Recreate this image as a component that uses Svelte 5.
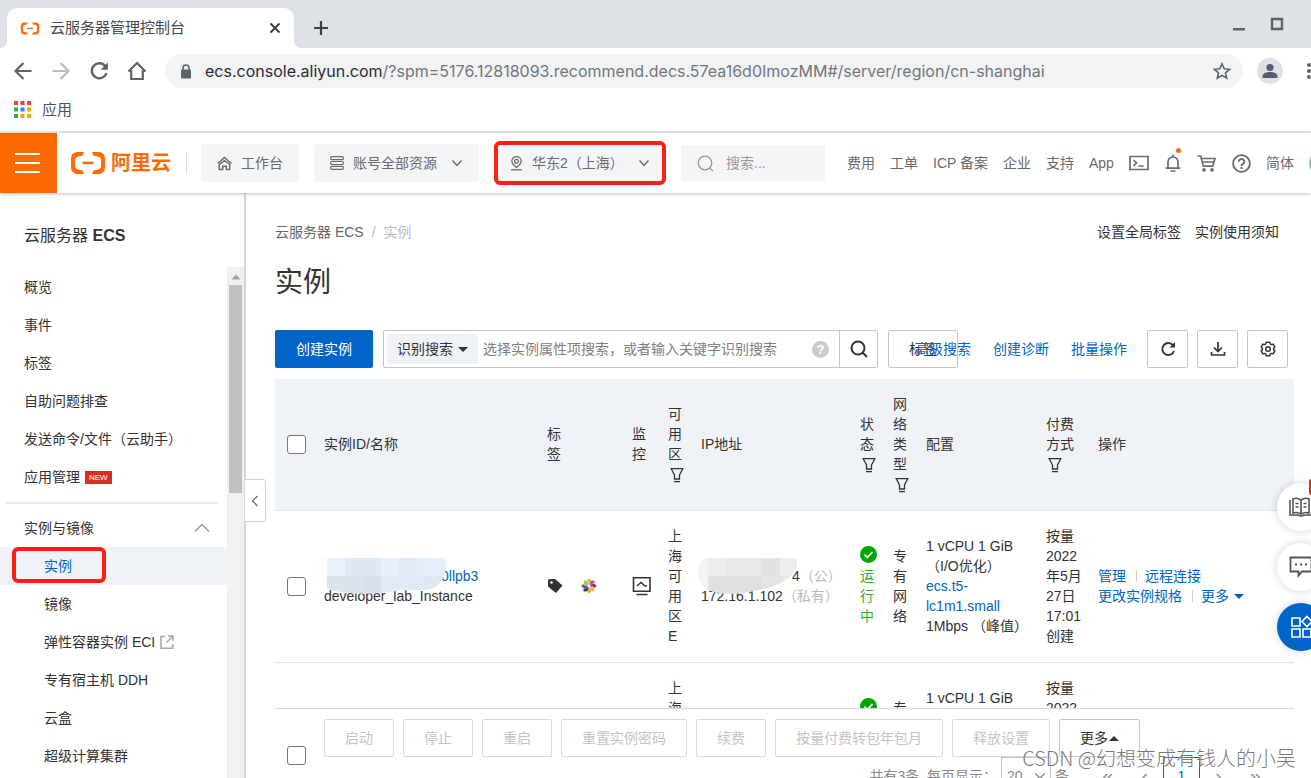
<script lang="ts">
  interface NavItem {
    label: string;
    isNew?: boolean;
    external?: boolean;
    active?: boolean;
  }

  const topItems: NavItem[] = [
    { label: "概览" },
    { label: "事件" },
    { label: "标签" },
    { label: "自助问题排查" },
    { label: "发送命令/文件（云助手）" },
    { label: "应用管理", isNew: true }
  ];

  const instanceItems: NavItem[] = [
    { label: "实例", active: true },
    { label: "镜像" },
    { label: "弹性容器实例 ECI", external: true },
    { label: "专有宿主机 DDH" },
    { label: "云盒" },
    { label: "超级计算集群" }
  ];

  const headerLinks = ["费用", "工单", "ICP 备案", "企业", "支持", "App"];
  const batchActions = ["启动", "停止", "重启", "重置实例密码", "续费", "按量付费转包年包月", "释放设置"];
  const appColors = ["#ea4335", "#ea4335", "#ea4335", "#34a853", "#1a88ff", "#fbaa05", "#34a853", "#fbaa05", "#fbaa05"];
  const petals = ["#f0a830", "#c04898", "#8c2d7c", "#f5b54a", "#f0a830", "#322b7c", "#5a4fa0", "#a4cf3c"];

  const instances = [
    { id: "0llpb3", name: "developer_lab_Instance", publicIp: "4", privateIp: "172.16.1.102" },
    { id: "7kq2xd", name: "developer_lab_Instance", publicIp: "8", privateIp: "172.16.1.103" }
  ];

  let keyword = "";
  let pageSize = "20";
</script>

{#snippet chevron(size: number)}
  <svg width={size} height={size} viewBox="0 0 12 12" fill="none" stroke="currentColor" stroke-width="1.5">
    <path d="M1.5 3.5 6 8.5l4.500-5" />
  </svg>
{/snippet}

{#snippet filter()}
  <svg class="filter" width="14" height="16" viewBox="0 0 14 16" fill="none" stroke="currentColor" stroke-width="1.3">
    <path d="M1.200 1.700h11.600L9.500 8v4h-5V8Z" />
    <path d="M4 14.600h6" />
  </svg>
{/snippet}

{#snippet brand(width: number, height: number)}
  <svg {width} {height} viewBox="0 0 36 24" fill="#ff6a00">
    <path d="M14 1H8Q1 1 1 8v8q0 7 7 7h6l-1.500-3.500-5-1.200Q5 17.700 5 15.500v-7q0-2.200 2.500-2.800l5-1.200Z" />
    <path d="M22 1h6q7 0 7 7v8q0 7-7 7h-6l1.500-3.500 5-1.200q2.500-.600 2.500-2.800v-7q0-2.200-2.500-2.800l-5-1.200Z" />
    <path d="M12.500 10.700h11v2.400h-11z" />
  </svg>
{/snippet}

<div class="window">
  <!-- Browser chrome -->
  <div class="tabs">
    <div class="tab">
      {@render brand(20, 13)}
      <span class="tab-title">云服务器管理控制台</span>
      <button aria-label="关闭标签页">
        <svg width="12" height="12" viewBox="0 0 12 12" stroke="#3c4043" stroke-width="2"><path d="m1.500 1.500 9 9m0-9-9 9" /></svg>
      </button>
    </div>
    <button class="new-tab" aria-label="新标签页">
      <svg width="16" height="16" viewBox="0 0 16 16" stroke="#3c4043" stroke-width="2.200"><path d="M8 1v14M1 8h14" /></svg>
    </button>
    <div class="controls">
      <button aria-label="最小化">
        <svg width="14" height="14" viewBox="0 0 14 14"><path d="M1 11h12v2.500H1z" fill="#5f6368" /></svg>
      </button>
      <button aria-label="最大化">
        <svg width="14" height="14" viewBox="0 0 14 14"><path d="M2 2h10v10H2z" fill="none" stroke="#5f6368" stroke-width="2.400" /></svg>
      </button>
    </div>
  </div>

  <div class="toolbar">
    <button aria-label="后退">
      <svg width="20" height="20" viewBox="0 0 20 20" fill="none" stroke="#5f6368" stroke-width="2.200"><path d="M18.500 10H3m7.500-8L2.500 10l8 8" /></svg>
    </button>
    <button aria-label="前进">
      <svg width="20" height="20" viewBox="0 0 20 20" fill="none" stroke="#babcbe" stroke-width="2.200"><path d="M1.500 10H17M9.500 2l8 8-8 8" /></svg>
    </button>
    <button aria-label="刷新">
      <svg width="20" height="20" viewBox="0 0 20 20" fill="none" stroke="#5f6368" stroke-width="2.400">
        <path d="M16.500 5.500a7.500 7.500 0 1 0 1 6.500" />
        <path d="M18.800 1.500v7.200h-7.200Z" fill="#5f6368" stroke="none" />
      </svg>
    </button>
    <button aria-label="主页">
      <svg width="20" height="20" viewBox="0 0 20 20" fill="none" stroke="#5f6368" stroke-width="2.200"><path d="M1.500 10.500 10 2l8.500 8.500M4.200 9v9h11.600V9" /></svg>
    </button>
    <div class="omnibox">
      <svg width="12" height="15" viewBox="0 0 12 15">
        <path d="M3 6V4a3 3 0 0 1 6 0v2" fill="none" stroke="#5f6368" stroke-width="1.600" />
        <rect x="1" y="5.500" width="10" height="9" rx="1" fill="#5f6368" />
      </svg>
      <span class="url"><b>ecs.console.aliyun.com</b>/?spm=5176.12818093.recommend.decs.57ea16d0ImozMM#/server/region/cn-shanghai</span>
      <button aria-label="收藏">
        <svg width="18" height="18" viewBox="0 0 18 18" fill="none" stroke="#5f6368" stroke-width="1.600">
          <path d="m9 1.800 2.200 5 5.400.5-4.100 3.600 1.200 5.300L9 13.400l-4.700 2.800 1.200-5.300-4.100-3.600 5.400-.5Z" />
        </svg>
      </button>
    </div>
    <button class="profile" aria-label="用户">
      <svg width="16" height="16" viewBox="0 0 16 16" fill="#555e70"><circle cx="8" cy="4.500" r="3.600" /><path d="M.5 15v-2c0-2.600 4-4 7.500-4s7.500 1.400 7.500 4v2Z" /></svg>
    </button>
    <button class="more-dots" aria-label="更多">
      <svg width="4" height="18" viewBox="0 0 4 18" fill="#5f6368"><circle cx="2" cy="3" r="2" /><circle cx="2" cy="9" r="2" /><circle cx="2" cy="15" r="2" /></svg>
    </button>
  </div>

  <div class="bookmarks">
    <svg width="17" height="17" viewBox="0 0 17 17">
      {#each appColors as color, i (i)}
        <rect x={(i % 3) * 6.5} y={Math.floor(i / 3) * 6.5} width="4" height="4" fill={color} />
      {/each}
    </svg>
    <a href="#apps">应用</a>
  </div>

  <!-- Console header -->
  <header>
    <button class="burger" aria-label="菜单">
      <svg width="25" height="20" viewBox="0 0 25 20" fill="#fff"><path d="M0 0h25v2H0zM0 9h25v2H0zM0 18h25v2H0z" /></svg>
    </button>
    <a class="logo" href="#home">{@render brand(36, 24)}<span>阿里云</span></a>
    <i class="divider"></i>
    <button class="pill">
      <svg width="15" height="15" viewBox="0 0 15 15" fill="none" stroke="currentColor" stroke-width="1.500">
        <path d="M.8 7.500 7.500 1.500l6.700 6M2.300 8.500v5h3.400v-3.300h3.600v3.300h3.400v-5L7.500 4.600Z" />
      </svg>
      工作台
    </button>
    <button class="pill account">
      <svg width="14" height="14" viewBox="0 0 14 14" fill="none" stroke="currentColor" stroke-width="1.200">
        <rect x=".7" y=".7" width="12.600" height="3" rx="1" />
        <rect x=".7" y="5.500" width="12.600" height="3" rx="1" />
        <rect x=".7" y="10.300" width="12.600" height="3" rx="1" />
      </svg>
      <span>账号全部资源</span>
      {@render chevron(12)}
    </button>
    <button class="pill region">
      <svg width="13" height="15" viewBox="0 0 13 15" fill="none" stroke="currentColor" stroke-width="1.300">
        <path d="M6.500 11.500C3 8.800 1.800 7.300 1.800 5.300a4.700 4.700 0 0 1 9.400 0c0 2-1.200 3.500-4.700 6.200Z" />
        <circle cx="6.500" cy="5.300" r="1.900" /><path d="M1 13.800h11" />
      </svg>
      <span>华东2（上海）</span>
      {@render chevron(12)}
    </button>
    <label class="search">
      <svg width="17" height="17" viewBox="0 0 17 17" fill="none" stroke="#999" stroke-width="1.300"><circle cx="8" cy="8" r="6.800" /><path d="m12.500 13 3.500 3" /></svg>
      <input type="text" placeholder="搜索..." aria-label="搜索" />
    </label>
    <nav>
      {#each headerLinks as link (link)}
        <a href="#{link}">{link}</a>
      {/each}
      <div class="tools">
        <button aria-label="命令行">
          <svg width="20" height="16" viewBox="0 0 20 16" fill="none" stroke="currentColor" stroke-width="1.700"><path d="M1 1.500h18v13H1zM4.500 5 7.500 8l-3 3M9.500 11h5" /></svg>
        </button>
        <button class="bell" aria-label="消息">
          <svg width="16" height="18" viewBox="0 0 16 18" fill="none" stroke="currentColor" stroke-width="1.700"><path d="M3 14V8a5 5 0 0 1 10 0v6M.7 14.200h14.600M8 .5V3M5.500 17h5" /></svg>
        </button>
        <button aria-label="购物车">
          <svg width="19" height="18" viewBox="0 0 19 18" fill="none" stroke="currentColor" stroke-width="1.700">
            <path d="M.5 2h3.200l2.600 10.200h9.400L18 4.500H4.500M5.500 8h11.500" />
            <circle cx="7" cy="15.800" r="1" /><circle cx="15" cy="15.800" r="1" />
          </svg>
        </button>
        <button aria-label="帮助">
          <svg width="19" height="19" viewBox="0 0 19 19" fill="none" stroke="currentColor" stroke-width="1.900"><circle cx="9.500" cy="9.500" r="8.400" /><path d="M6.700 7.700a2.800 2.600 0 1 1 4.300 2.200q-1.500.8-1.500 2M9.500 13v1.900" /></svg>
        </button>
      </div>
      <a href="#lang">简体</a>
      <i class="avatar"></i>
    </nav>
  </header>

  <div class="body">
    <aside>
      <h2>云服务器 <b>ECS</b></h2>
      <div class="scroll">
        <div class="menu">
          {#each topItems as item (item.label)}
            <a href="#{item.label}">{item.label}{#if item.isNew}<em>NEW</em>{/if}</a>
          {/each}
          <hr />
          <button class="group">
            实例与镜像
            <svg width="16" height="10" viewBox="0 0 16 10" fill="none" stroke="#999" stroke-width="1.500"><path d="m1 8.500 7-7 7 7" /></svg>
          </button>
          {#each instanceItems as item (item.label)}
            <a class="sub" class:active={item.active} href="#{item.label}">
              {item.label}
              {#if item.external}
                <svg width="14" height="14" viewBox="0 0 14 14" fill="none" stroke="#aaa" stroke-width="1.600"><path d="M5 1.500H1v11.700h11.700V9M8 1h5v5M13 1 6.500 7.500" /></svg>
              {/if}
            </a>
          {/each}
        </div>
        <div class="scrollbar">
          <svg width="10" height="6" viewBox="0 0 10 6"><path d="m5 .5 4.500 5h-9Z" fill="#a3a3a3" /></svg>
          <div class="thumb"></div>
        </div>
      </div>
    </aside>

    <main>
      <button class="collapse" aria-label="收起">
        <svg width="8" height="12" viewBox="0 0 8 12" fill="none" stroke="#777" stroke-width="1.500"><path d="M6.500 1 1.500 6l5 5" /></svg>
      </button>

      <div class="crumbs">
        <a href="#ecs">云服务器 ECS</a><span>/</span><span>实例</span>
        <div class="crumb-links">
          <a href="#tags">设置全局标签</a>
          <a href="#notice">实例使用须知</a>
        </div>
      </div>
      <h1>实例</h1>

      <div class="actions">
        <div class="left">
          <button class="primary">创建实例</button>
          <div class="query">
            <button class="mode">识别搜索 <i class="caret"></i></button>
            <input type="text" aria-label="搜索实例" placeholder="选择实例属性项搜索，或者输入关键字识别搜索" bind:value={keyword} />
            <span class="hint">?</span>
            <button class="go" aria-label="查询">
              <svg width="18" height="18" viewBox="0 0 18 18" fill="none" stroke="#333" stroke-width="2"><circle cx="8" cy="8" r="6.500" /><path d="m12.500 12.500 4.500 4.500" /></svg>
            </button>
          </div>
          <button class="plain">标签</button>
        </div>
        <div class="right">
          <a href="#advanced">高级搜索</a>
          <a href="#diagnose">创建诊断</a>
          <a href="#batch">批量操作</a>
          <div class="icons">
            <button aria-label="刷新">
              <svg width="16" height="16" viewBox="0 0 16 16" fill="none" stroke="#333" stroke-width="1.900"><path d="M13 4.300A6 6 0 1 0 14 10" /><path d="M15 1v5.500H9.500Z" fill="#333" stroke="none" /></svg>
            </button>
            <button aria-label="下载">
              <svg width="16" height="16" viewBox="0 0 16 16" fill="none" stroke="#333" stroke-width="1.700"><path d="M8 1v9M4 6.500l4 4 4-4M1.500 11v3h13v-3" /></svg>
            </button>
            <button aria-label="设置">
              <svg width="16" height="16" viewBox="0 0 16 16" fill="none" stroke="#333" stroke-width="1.500" stroke-linejoin="round">
                <path d="M6.200 1.200h3.600l.4 1.700 1.200.7 1.700-.5 1.700 3-1.200 1.200v1.400l1.200 1.200-1.700 3-1.700-.5-1.200.7-.4 1.700H6.200l-.4-1.700-1.200-.7-1.700.5-1.700-3 1.200-1.200V7.300L1.200 6.100l1.700-3 1.700.5 1.200-.7Z" />
                <circle cx="8" cy="8" r="2.300" />
              </svg>
            </button>
          </div>
        </div>
      </div>

      <div class="table-wrap">
        <table>
          <colgroup>
            <col class="w-check" /><col class="w-name" /><col class="w-tag" /><col class="w-mon" /><col class="w-narrow" />
            <col class="w-ip" /><col class="w-narrow" /><col class="w-narrow" /><col class="w-conf" /><col class="w-pay" /><col />
          </colgroup>
          <thead>
            <tr>
              <th class="check"><input type="checkbox" aria-label="全选" /></th>
              <th>实例ID/名称</th>
              <th><div class="stack">标签</div></th>
              <th>监控</th>
              <th>可用区{@render filter()}</th>
              <th>IP地址</th>
              <th>状态{@render filter()}</th>
              <th>网络类型{@render filter()}</th>
              <th>配置</th>
              <th>付费方式{@render filter()}</th>
              <th>操作</th>
            </tr>
          </thead>
          <tbody>
            {#each instances as inst (inst.id)}
              <tr>
                <td class="check"><input type="checkbox" aria-label="选择 {inst.id}" /></td>
                <td>
                  <div class="masked">
                    <a class="id" href="#{inst.id}">{inst.id}</a><br />{inst.name}
                    <svg class="mosaic-id" width="134" height="36" viewBox="0 0 134 36">
                      <clipPath id="blob-{inst.id}"><path d="M8 0h122q4 0 4 8-1 14-12 22-12 3-32 2-32 6-62 2Q0 28 0 14 0 2 8 0Z" /></clipPath>
                      <g clip-path="url(#blob-{inst.id})">
                        <path d="M0 0h134v36H0z" fill="#fdfdfe" />
                        <path d="M15 0h18v18H15z" fill="#e9f1fb" /><path d="M33 0h36v18H33z" fill="#dfe9f6" />
                        <path d="M69 0h18v18H69z" fill="#e7effa" /><path d="M87 0h18v18H87z" fill="#e0eaf6" /><path d="M105 0h29v18h-29z" fill="#e4edf9" />
                        <path d="M15 18h36v18H15z" fill="#dce3ed" /><path d="M51 18h18v18H51z" fill="#d8e0ec" />
                        <path d="M69 18h36v18H69z" fill="#e1eaf5" /><path d="M105 18h29v18h-29z" fill="#dfe8f3" />
                      </g>
                    </svg>
                  </div>
                </td>
                <td>
                  <div class="tags">
                    <svg width="16" height="16" viewBox="0 0 16 16"><path d="M1 3q0-2 2-2h5l7.500 6.500L9 15 1 8.500Z" fill="#333" /><circle cx="4.500" cy="4.500" r="1.300" fill="#fff" /></svg>
                    <svg width="16" height="16" viewBox="0 0 16 16">
                      {#each petals as color, i (i)}
                        <path d="M8 8 5.200 3.800 6.500 1.500 8 .2l1.500 1.300 1.300 2.300Z" fill={color} stroke="#fff" stroke-width=".400" transform="rotate({i * 45} 8 8)" />
                      {/each}
                      <circle cx="8" cy="8" r="1.200" fill="#fff" />
                    </svg>
                  </div>
                </td>
                <td class="wide-icon">
                  <svg width="20" height="20" viewBox="0 0 20 20" fill="none" stroke="#333" stroke-width="1.600"><path d="M1.500 1.800h16.500v13.500H1.500zM5 10l4-3.500L13 10h2M4.500 18.500h11" /></svg>
                </td>
                <td>上海可用区E</td>
                <td>
                  <div class="masked nowrap">
                    <span class="public">{inst.publicIp}</span><small>（公）</small><br />{inst.privateIp}<small>（私有）</small>
                    <svg class="mosaic-ip" width="100" height="36" viewBox="0 0 100 36">
                      <clipPath id="ip-{inst.id}"><path d="M8 0h90q4 12-8 20-8 8-30 12-24 6-44 2Q0 30 0 14 0 4 8 0Z" /></clipPath>
                      <g clip-path="url(#ip-{inst.id})">
                        <path d="M0 0h100v36H0z" fill="#f4f4f4" />
                        <path d="M10 0h18v18H10z" fill="#ededed" /><path d="M28 0h36v18H28z" fill="#e8e8e8" />
                        <path d="M64 0h18v18H64z" fill="#e2e2e3" /><path d="M82 0h18v18H82z" fill="#ededed" />
                        <path d="M10 18h54v18H10z" fill="#e0e0e0" /><path d="M64 18h36v18H64z" fill="#e5e5e6" />
                      </g>
                    </svg>
                  </div>
                </td>
                <td class="running">
                  <svg width="17" height="17" viewBox="0 0 17 17"><circle cx="8.500" cy="8.500" r="8.500" fill="#00a700" /><path d="m4.500 8.700 2.800 2.800L12.500 6" fill="none" stroke="#fff" stroke-width="1.800" /></svg>
                  运行中
                </td>
                <td>专有网络</td>
                <td class="nowrap">1 vCPU 1 GiB<br />（I/O优化）<br /><a href="#spec">ecs.t5-<br />lc1m1.small</a><br />1Mbps （峰值）</td>
                <td class="nowrap">按量<br />2022<br />年5月<br />27日<br />17:01<br />创建</td>
                <td>
                  <a href="#manage">管理</a><i class="bar"></i><a href="#connect">远程连接</a><br />
                  <a href="#resize">更改实例规格</a><i class="bar"></i><a href="#more">更多 <i class="caret blue"></i></a>
                </td>
              </tr>
            {/each}
          </tbody>
        </table>
      </div>

      <footer>
        <input type="checkbox" aria-label="选择本页全部" />
        <div class="footer-main">
          <div class="batch">
            {#each batchActions as action (action)}
              <button disabled>{action}</button>
            {/each}
            <button class="more">更多<i class="caret up"></i></button>
          </div>
          <div class="pager">
            <label for="page-size">共有3条, 每页显示：</label>
            <div class="size">
              <select id="page-size" bind:value={pageSize}>
                <option>20</option>
                <option>50</option>
              </select>
              {@render chevron(12)}
            </div>
            <span>条</span>
            <button>«</button>
            <button>‹</button>
            <button class="current">1</button>
            <button>›</button>
            <button>»</button>
          </div>
        </div>
      </footer>
    </main>
  </div>

  <div class="floats">
    <button aria-label="文档">
      <svg width="24" height="22" viewBox="0 0 24 22" fill="none" stroke="#555" stroke-width="1.600"><path d="M12 4Q8 1 4 3v14q4-1.500 8 1 4-2.500 8-1V3q-4-2-8 1v14M1 4v15h8q3 2 6 0h8V4M6.500 7.500h3M6.500 11h3M14.500 7.500h3M14.500 11h3" /></svg>
      <i class="badge"></i>
    </button>
    <button aria-label="反馈">
      <svg width="24" height="22" viewBox="0 0 24 22" fill="none" stroke="#555" stroke-width="1.800"><path d="M1.500 1.500h21v14H13l-3.500 4v-4h-8Z" /><path d="M6 8.500h2m3 0h2m3 0h2" stroke-width="2" /></svg>
    </button>
    <button class="apps" aria-label="应用中心">
      <svg width="24" height="24" viewBox="0 0 24 24" fill="none" stroke="#fff" stroke-width="1.600"><path d="M3 3h8v8H3zM3 14h8v8H3zM14 14h8v8h-8zM18 1.500 23 6.500l-5 5-5-5Z" /></svg>
    </button>
  </div>
  <div class="watermark">CSDN @幻想变成有钱人的小吴</div>
</div>

<style>
  :global(body) {
    margin: 0;
    background: #fff;
  }

  .window {
    position: relative;
    display: flex;
    flex-direction: column;
    height: 100vh;
    overflow: hidden;
    color: #333;
    font-family: "Liberation Sans", "Noto Sans CJK SC", sans-serif;
    font-size: 14px;
    line-height: 20px;
  }

  .window *,
  .window *::before,
  .window *::after {
    box-sizing: border-box;
  }

  button,
  input,
  select {
    margin: 0;
    padding: 0;
    border: 0;
    background: none;
    color: inherit;
    font: inherit;
  }

  a {
    color: inherit;
    text-decoration: none;
  }

  svg {
    display: block;
    flex-shrink: 0;
  }

  .tabs {
    display: flex;
    align-items: flex-end;
    height: 48px;
    flex-shrink: 0;
    padding-left: 7px;
    background: #dee1e6;
  }

  .tab {
    position: relative;
    display: flex;
    align-items: center;
    width: 287px;
    height: 40px;
    padding: 0 13px;
    border-radius: 10px 10px 0 0;
    background: #fff;
  }

  .tab::before,
  .tab::after {
    content: "";
    position: absolute;
    bottom: 0;
    left: -8px;
    width: 8px;
    height: 8px;
    background: radial-gradient(circle at 0 0, #dee1e6 8px, #fff 8px);
  }

  .tab::after {
    left: auto;
    right: -8px;
    background: radial-gradient(circle at 100% 0, #dee1e6 8px, #fff 8px);
  }

  .tab-title {
    flex: 1;
    padding-left: 10px;
    color: #45494d;
    font-size: 15px;
  }

  .new-tab {
    height: 40px;
    padding: 0 19px;
  }

  .controls {
    display: flex;
    gap: 24px;
    height: 48px;
    margin-left: auto;
    padding-right: 27px;
  }

  .toolbar {
    display: flex;
    align-items: center;
    gap: 18px;
    height: 46px;
    flex-shrink: 0;
    padding-left: 13px;
  }

  .omnibox {
    display: flex;
    align-items: center;
    flex: 1;
    min-width: 0;
    height: 34px;
    padding: 0 12px 0 15px;
    border-radius: 17px;
    background: #f1f3f4;
  }

  .url {
    flex: 1;
    padding-left: 13px;
    color: #74777a;
    font-family: Inter, "Liberation Sans", sans-serif;
    font-size: 16px;
    white-space: nowrap;
  }

  .url b {
    color: #2b2e31;
    font-weight: 400;
  }

  .profile {
    display: flex;
    align-items: center;
    justify-content: center;
    width: 26px;
    height: 26px;
    margin-left: -4px;
    border-radius: 50%;
    background: #dee1e6;
  }

  .more-dots {
    width: 10px;
    padding-left: 6px;
  }

  .bookmarks {
    display: flex;
    align-items: center;
    gap: 11px;
    height: 39px;
    flex-shrink: 0;
    padding: 0 14px 6px;
    border-bottom: 2px solid #e6e8ea;
    color: #505458;
    font-size: 15px;
  }

  header {
    position: relative;
    z-index: 2;
    display: flex;
    align-items: center;
    height: 60px;
    flex-shrink: 0;
    background: #fff;
    box-shadow: 0 1px 4px rgba(0, 0, 0, 0.25);
    color: #6b6b6b;
  }

  .burger {
    display: flex;
    align-items: center;
    justify-content: center;
    width: 57px;
    height: 60px;
    padding-right: 3px;
    background: #ff6a00;
  }

  .logo {
    display: flex;
    align-items: center;
    gap: 5px;
    padding: 0 15px 0 13px;
    color: #ff6a00;
    font-size: 20px;
    font-weight: 700;
  }

  .divider {
    width: 1px;
    height: 22px;
    margin-right: 14px;
    background: #ddd;
  }

  .pill {
    position: relative;
    display: flex;
    align-items: center;
    gap: 9px;
    height: 38px;
    margin-right: 15px;
    padding: 0 16px;
    border-radius: 2px;
    background: #f4f5f7;
    white-space: nowrap;
  }

  .account {
    width: 165px;
  }

  .pill span {
    flex: 1;
    text-align: left;
  }

  .region {
    width: 172px;
  }

  .region::after,
  .active::after {
    content: "";
    position: absolute;
    border: 4px solid #fc1f12;
    border-radius: 6px;
  }

  .region::after {
    inset: -3px 0;
  }

  .search {
    display: flex;
    align-items: center;
    gap: 12px;
    width: 144px;
    height: 36px;
    padding-left: 16px;
    background: #f4f5f7;
  }

  .search input {
    width: 90px;
    outline: none;
  }

  .search input::placeholder {
    color: #999;
  }

  nav {
    display: flex;
    align-items: center;
    gap: 15px;
    flex: 1;
    min-width: 0;
    overflow: hidden;
    height: 60px;
    padding-left: 22px;
    white-space: nowrap;
  }

  .tools {
    display: flex;
    align-items: center;
    gap: 16px;
  }

  .bell {
    position: relative;
  }

  .bell::after {
    content: "";
    position: absolute;
    top: -6px;
    right: 0;
    width: 5px;
    height: 5px;
    border-radius: 50%;
    background: #ff6a00;
  }

  .avatar {
    flex-shrink: 0;
    width: 30px;
    height: 30px;
    border-radius: 50%;
    background: #8fbccb;
  }

  .body {
    display: flex;
    flex: 1;
    min-height: 0;
  }

  aside {
    display: flex;
    flex-direction: column;
    width: 246px;
    flex-shrink: 0;
    border-right: 2px solid #d3d7db;
  }

  h2 {
    margin: 0;
    padding: 33px 24px 21px;
    font-size: 16px;
    font-weight: 400;
    line-height: 20px;
  }

  .scroll {
    display: flex;
    flex: 1;
    min-height: 0;
    overflow: hidden;
  }

  .menu {
    flex: 1;
    padding-top: 1px;
  }

  .menu a,
  .group {
    position: relative;
    display: flex;
    align-items: center;
    width: 100%;
    height: 38px;
    padding-left: 24px;
  }

  .menu em {
    height: 13px;
    margin-left: 5px;
    padding: 0 4px;
    background: #d93026;
    color: #fff;
    font-size: 8px;
    font-style: normal;
    line-height: 13px;
  }

  hr {
    height: 2px;
    margin: 6px 9px 5px 5px;
    border: 0;
    background: #ebebeb;
  }

  .group {
    justify-content: space-between;
    padding-right: 17px;
  }

  .menu .sub {
    gap: 5px;
    padding-left: 44px;
  }

  .menu .active {
    background: #eff3f8;
    color: #0064c8;
  }

  .active::after {
    top: 0;
    left: 12px;
    width: 94px;
    height: 36px;
  }

  .scrollbar {
    display: flex;
    flex-direction: column;
    align-items: center;
    gap: 5px;
    width: 17px;
    padding-top: 7px;
    background: #f1f1f1;
  }

  .thumb {
    width: 13px;
    height: 208px;
    background: #c1c1c1;
  }

  main {
    position: relative;
    display: flex;
    flex-direction: column;
    flex: 1;
    min-width: 0;
    padding: 29px 17px 0 29px;
  }

  .collapse {
    position: absolute;
    top: 286px;
    left: -1px;
    display: flex;
    align-items: center;
    justify-content: center;
    width: 21px;
    height: 43px;
    border: 1px solid #cdd3d9;
    border-left: 0;
    border-radius: 0 3px 3px 0;
    background: #fff;
  }

  .crumbs {
    display: flex;
    gap: 8px;
    color: #666;
  }

  .crumbs span {
    color: #bbb;
  }

  .crumb-links {
    display: flex;
    gap: 14px;
    margin-left: auto;
    padding-right: 15px;
    color: #333;
  }

  h1 {
    margin: 23px 0 29px;
    font-size: 28px;
    font-weight: 400;
    line-height: 36px;
  }

  .actions {
    display: flex;
    align-items: center;
    height: 38px;
    flex-shrink: 0;
    margin-bottom: 11px;
    padding-right: 6px;
  }

  .left {
    display: flex;
    flex: 1;
    gap: 10px;
    min-width: 0;
  }

  .left > * {
    flex-shrink: 0;
  }

  .primary {
    width: 98px;
    height: 38px;
    border-radius: 2px;
    background: #0064c8;
    color: #fff;
  }

  .query {
    display: flex;
    align-items: center;
    width: 495px;
    height: 38px;
    padding-left: 3px;
    border: 1px solid #c0c6cc;
    border-radius: 2px;
  }

  .mode {
    height: 30px;
    padding: 0 10px;
    border-radius: 2px;
    background: #eff3f8;
  }

  .caret {
    display: inline-block;
    margin-left: 1px;
    border: 5px solid transparent;
    border-top-color: #333;
    border-bottom: 0;
    vertical-align: 2px;
  }

  .caret.blue {
    border-top-color: #0064c8;
  }

  .caret.up {
    border-top: 0;
    border-bottom: 5px solid #333;
  }

  .query input {
    flex: 1;
    min-width: 0;
    padding-left: 5px;
    outline: none;
  }

  .query input::placeholder {
    color: #808080;
  }

  .hint {
    width: 17px;
    height: 17px;
    margin-right: 10px;
    border-radius: 50%;
    background: #ccc;
    color: #fff;
    font-size: 13px;
    font-weight: 700;
    line-height: 17px;
    text-align: center;
  }

  .go {
    display: flex;
    align-items: center;
    justify-content: center;
    width: 38px;
    height: 36px;
    border-left: 1px solid #c0c6cc;
  }

  .plain {
    width: 70px;
    height: 38px;
    border: 1px solid #c0c6cc;
    border-radius: 2px;
  }

  .right {
    position: relative;
    display: flex;
    align-items: center;
    gap: 22px;
    color: #0064c8;
  }

  .icons {
    display: flex;
    gap: 9px;
    margin-left: -2px;
  }

  .icons button {
    display: flex;
    align-items: center;
    justify-content: center;
    width: 41px;
    height: 38px;
    border: 1px solid #c0c6cc;
    border-radius: 2px;
    background: #fff;
  }

  .table-wrap {
    flex: 1;
    min-height: 0;
    overflow: hidden;
  }

  table {
    width: 100%;
    border-collapse: collapse;
    table-layout: fixed;
  }

  .w-check { width: 41px; }
  .w-name { width: 223px; }
  .w-tag { width: 85px; }
  .w-mon { width: 36px; }
  .w-narrow { width: 33px; }
  .w-ip { width: 159px; }
  .w-conf { width: 120px; }
  .w-pay { width: 52px; }

  th,
  td {
    padding: 15px 8px 16px;
    border-bottom: 1px solid #dfe3e8;
    font-weight: 400;
    text-align: left;
    vertical-align: middle;
  }

  th {
    background: #eff3f8;
  }

  td {
    padding: 15px 8px 16px;
  }

  th.check,
  td.check {
    padding: 0 0 0 12px;
  }

  .stack {
    width: 14px;
  }

  .nowrap {
    white-space: nowrap;
  }

  td a {
    color: #0064c8;
  }

  input[type="checkbox"] {
    display: block;
    width: 19px;
    height: 19px;
    border: 1px solid #767676;
    border-radius: 3px;
    background: #fff;
    appearance: none;
  }

  .filter {
    margin: 3px 0 1px 2px;
  }

  .masked {
    position: relative;
  }

  .id {
    padding-left: 117px;
  }

  .public {
    padding-left: 91px;
  }

  .masked small {
    color: #bbb;
    font-size: 14px;
  }

  .mosaic-id,
  .mosaic-ip {
    position: absolute;
    top: -8px;
    left: -12px;
  }

  .mosaic-ip {
    left: -3px;
  }

  .tags {
    display: flex;
    gap: 18px;
  }

  td.wide-icon {
    padding-right: 0;
  }

  .running {
    color: #1eb41e;
  }

  .running svg {
    margin-bottom: 3px;
  }

  .bar {
    display: inline-block;
    width: 1px;
    height: 12px;
    margin: 0 8px 0 10px;
    background: #ccc;
    vertical-align: -1px;
  }

  footer {
    display: flex;
    gap: 18px;
    height: 70px;
    flex-shrink: 0;
    overflow: hidden;
    padding-left: 12px;
    border-top: 1px solid #d5d9dd;
  }

  footer > input[type="checkbox"] {
    margin-top: 37px;
  }

  .footer-main {
    flex: 1;
  }

  .batch {
    display: flex;
    gap: 9px;
    padding-top: 10px;
  }

  .batch button {
    height: 38px;
    padding: 0 20px;
    border: 1px solid #d5dade;
    border-radius: 2px;
    color: #c4c4c4;
    white-space: nowrap;
  }

  .batch .more {
    border-color: #c0c6cc;
    color: #333;
  }

  .pager {
    display: flex;
    align-items: center;
    justify-content: flex-end;
    gap: 4px;
    height: 38px;
    padding-right: 24px;
    color: #888;
  }

  .size {
    display: flex;
    align-items: center;
    width: 50px;
    height: 38px;
    border: 1px solid #c0c6cc;
  }

  .size select {
    width: 32px;
    padding-left: 5px;
    appearance: none;
  }

  .pager button {
    width: 37px;
    height: 38px;
    margin-right: -4px;
    font-size: 20px;
  }

  .pager span {
    padding-right: 16px;
  }

  .pager .current {
    border: 1px solid #0064c8;
    color: #0064c8;
    font-size: 14px;
  }

  .floats {
    position: absolute;
    top: 483px;
    right: -14px;
    z-index: 3;
    display: flex;
    flex-direction: column;
    gap: 12px;
  }

  .floats button {
    position: relative;
    display: flex;
    align-items: center;
    justify-content: center;
    width: 48px;
    height: 48px;
    border-radius: 50%;
    background: #fff;
    box-shadow: 0 0 8px rgba(0, 0, 0, 0.18);
  }

  .floats .apps {
    background: #0064c8;
  }

  .badge {
    position: absolute;
    top: -4px;
    left: 32px;
    width: 14px;
    height: 16px;
    border-radius: 2px;
    background: #d93026;
  }

  .watermark {
    position: absolute;
    right: 15px;
    bottom: 8px;
    z-index: 4;
    color: rgba(95, 95, 95, 0.85);
    font-family: "Noto Sans CJK SC", sans-serif;
    font-size: 20px;
    font-weight: 300;
    line-height: 24px;
    text-shadow: 0 0 2px #fff;
  }
</style>
